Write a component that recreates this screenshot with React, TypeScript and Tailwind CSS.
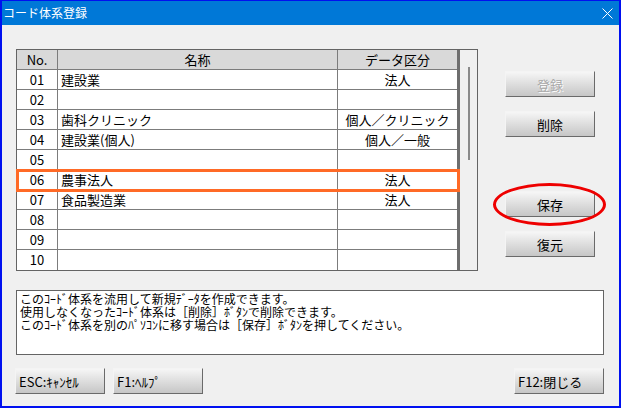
import React from 'react';

const rows = [
  { no: '01', name: '建設業', kind: '法人' },
  { no: '02', name: '', kind: '' },
  { no: '03', name: '歯科クリニック', kind: '個人／クリニック' },
  { no: '04', name: '建設業(個人)', kind: '個人／一般' },
  { no: '05', name: '', kind: '' },
  { no: '06', name: '農事法人', kind: '法人' },
  { no: '07', name: '食品製造業', kind: '法人' },
  { no: '08', name: '', kind: '' },
  { no: '09', name: '', kind: '' },
  { no: '10', name: '', kind: '' },
];

const font = { fontFamily: '"Noto Sans CJK JP", "Noto Sans", sans-serif' };

const Btn: React.FC<{ label: string; left?: boolean; disabled?: boolean }> = ({ label, left, disabled }) => (
  <div
    className={`h-[26px] w-[90px] flex items-center border border-t-[#f4f4f4] border-l-[#f4f4f4] border-r-[#6a6a6a] border-b-[#6a6a6a] bg-gradient-to-b from-[#f6f6f6] to-[#c6c6c6] text-[13px] leading-none ${
      left ? 'justify-start pl-[3px]' : 'justify-center'
    } ${disabled ? 'text-[#a8a8a8] [text-shadow:1px_1px_0_#ffffff]' : 'text-black'}`}
  >
    {label}
  </div>
);

export default function App() {
  return (
    <div style={font} className="w-[621px] h-[408px] border-x-2 border-b-2 border-t border-[#0010f0] bg-[#f0f0f0] flex flex-col overflow-hidden">
      <div className="h-[24px] bg-[#0078d7] flex items-center justify-between pl-[1px] pr-[6px] text-white text-[12px] shrink-0">
        <span>コード体系登録</span>
        <svg width="11" height="11" viewBox="0 0 11 11">
          <path d="M0.5 0.5 L10.5 10.5 M10.5 0.5 L0.5 10.5" stroke="#ffffff" strokeWidth="1" fill="none" />
        </svg>
      </div>

      <div className="flex flex-col pl-[14px] pt-[24px]">
        <div className="flex">
          <div className="relative w-[462px] h-[222px] border border-[#646464] flex bg-white">
            <div className="flex flex-col w-[440px] text-[13px] text-black">
              <div className="flex h-[20px] bg-[#d9d9d9] border-b border-[#7c7c7c]">
                <div className="w-[41px] border-r border-[#7c7c7c] flex items-center justify-center">No.</div>
                <div className="w-[280px] border-r border-[#7c7c7c] flex items-center justify-center">名称</div>
                <div className="w-[119px] flex items-center justify-center">データ区分</div>
              </div>
              {rows.map((r, i) => (
                <div key={r.no} className={`flex h-[20px] ${i < rows.length - 1 ? 'border-b border-[#7c7c7c]' : ''}`}>
                  <div className="w-[41px] border-r border-[#7c7c7c] flex items-center justify-center">{r.no}</div>
                  <div className="w-[280px] border-r border-[#7c7c7c] flex items-center pl-[3px]">{r.name}</div>
                  <div className="w-[119px] flex items-center justify-center">{r.kind}</div>
                </div>
              ))}
            </div>
            <div className="w-[3px] bg-[#6e6e6e]" />
            <div className="w-[17px] bg-[#f0f0f0] pt-[17px] pl-[8px]">
              <div className="w-[2px] h-[93px] bg-[#8a8a8a]" />
            </div>
            <div className="absolute left-[-1px] top-[119px] w-[444px] h-[23px] border-[3px] border-[#ff6a26]" />
          </div>

          <div className="flex flex-col ml-[27px] pt-[22px]">
            <Btn label="登録" disabled />
            <div className="mt-[14px]">
              <Btn label="削除" />
            </div>
            <div className="relative mt-[54px]">
              <Btn label="保存" />
              <div className="absolute left-[-12px] top-[-8px] w-[113px] h-[43px] rounded-[50%] border-[3px] border-[#ee0000]" />
            </div>
            <div className="mt-[14px]">
              <Btn label="復元" />
            </div>
          </div>
        </div>

        <div className="mt-[19px] w-[588px] h-[65px] border border-[#646464] bg-white px-[3px] pt-[1px] text-[12px] leading-[13px] text-black">
          <div>このｺｰﾄﾞ体系を流用して新規ﾃﾞｰﾀを作成できます。</div>
          <div>使用しなくなったｺｰﾄﾞ体系は［削除］ﾎﾞﾀﾝで削除できます。</div>
          <div>このｺｰﾄﾞ体系を別のﾊﾟｿｺﾝに移す場合は［保存］ﾎﾞﾀﾝを押してください。</div>
        </div>

        <div className="mt-[13px] flex ml-[-1px]">
          <Btn label="ESC:ｷｬﾝｾﾙ" left />
          <div className="ml-[8px]">
            <Btn label="F1:ﾍﾙﾌﾟ" left />
          </div>
          <div className="ml-auto mr-[15px]">
            <Btn label="F12:閉じる" left />
          </div>
        </div>
      </div>
    </div>
  );
}
